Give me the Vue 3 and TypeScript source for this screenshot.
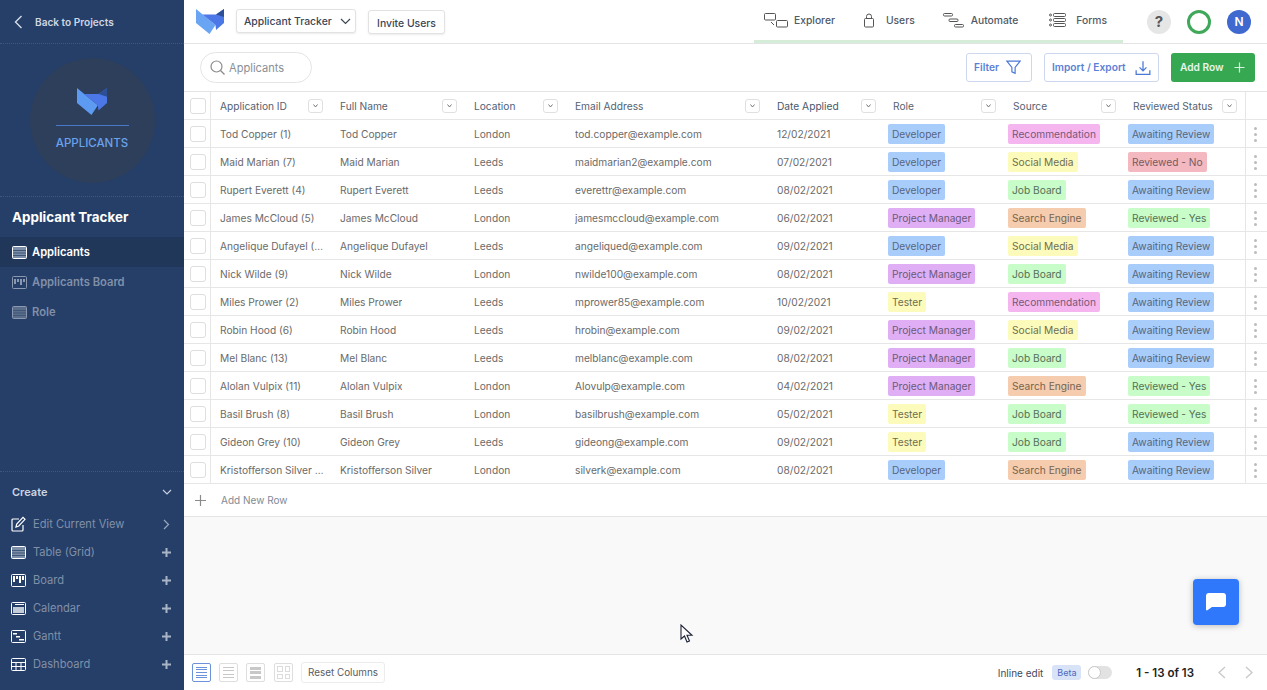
<script setup lang="ts">
interface Row { id: string; name: string; loc: string; email: string; date: string; role: string; source: string; status: string }

const rows: Row[] = [
  { id: 'Tod Copper (1)', name: 'Tod Copper', loc: 'London', email: 'tod.copper@example.com', date: '12/02/2021', role: 'Developer', source: 'Recommendation', status: 'Awaiting Review' },
  { id: 'Maid Marian (7)', name: 'Maid Marian', loc: 'Leeds', email: 'maidmarian2@example.com', date: '07/02/2021', role: 'Developer', source: 'Social Media', status: 'Reviewed - No' },
  { id: 'Rupert Everett (4)', name: 'Rupert Everett', loc: 'Leeds', email: 'everettr@example.com', date: '08/02/2021', role: 'Developer', source: 'Job Board', status: 'Awaiting Review' },
  { id: 'James McCloud (5)', name: 'James McCloud', loc: 'London', email: 'jamesmccloud@example.com', date: '06/02/2021', role: 'Project Manager', source: 'Search Engine', status: 'Reviewed - Yes' },
  { id: 'Angelique Dufayel (12)', name: 'Angelique Dufayel', loc: 'Leeds', email: 'angeliqued@example.com', date: '09/02/2021', role: 'Developer', source: 'Social Media', status: 'Awaiting Review' },
  { id: 'Nick Wilde (9)', name: 'Nick Wilde', loc: 'London', email: 'nwilde100@example.com', date: '08/02/2021', role: 'Project Manager', source: 'Job Board', status: 'Awaiting Review' },
  { id: 'Miles Prower (2)', name: 'Miles Prower', loc: 'Leeds', email: 'mprower85@example.com', date: '10/02/2021', role: 'Tester', source: 'Recommendation', status: 'Awaiting Review' },
  { id: 'Robin Hood (6)', name: 'Robin Hood', loc: 'Leeds', email: 'hrobin@example.com', date: '09/02/2021', role: 'Project Manager', source: 'Social Media', status: 'Awaiting Review' },
  { id: 'Mel Blanc (13)', name: 'Mel Blanc', loc: 'Leeds', email: 'melblanc@example.com', date: '08/02/2021', role: 'Project Manager', source: 'Job Board', status: 'Awaiting Review' },
  { id: 'Alolan Vulpix (11)', name: 'Alolan Vulpix', loc: 'London', email: 'Alovulp@example.com', date: '04/02/2021', role: 'Project Manager', source: 'Search Engine', status: 'Reviewed - Yes' },
  { id: 'Basil Brush (8)', name: 'Basil Brush', loc: 'London', email: 'basilbrush@example.com', date: '05/02/2021', role: 'Tester', source: 'Job Board', status: 'Reviewed - Yes' },
  { id: 'Gideon Grey (10)', name: 'Gideon Grey', loc: 'Leeds', email: 'gideong@example.com', date: '09/02/2021', role: 'Tester', source: 'Job Board', status: 'Awaiting Review' },
  { id: 'Kristofferson Silver (3)', name: 'Kristofferson Silver', loc: 'London', email: 'silverk@example.com', date: '08/02/2021', role: 'Developer', source: 'Search Engine', status: 'Awaiting Review' },
]

const headers = ['Application ID', 'Full Name', 'Location', 'Email Address', 'Date Applied', 'Role', 'Source', 'Reviewed Status']

const colors: Record<string, string> = {
  Developer: 'blue', 'Project Manager': 'purple', Tester: 'yellow',
  Recommendation: 'pink', 'Social Media': 'yellow', 'Job Board': 'green', 'Search Engine': 'orange',
  'Awaiting Review': 'blue', 'Reviewed - No': 'red', 'Reviewed - Yes': 'green',
}

const createItems = ['Table (Grid)', 'Board', 'Calendar', 'Gantt', 'Dashboard']
</script>

<template>
  <div class="app">
    <aside class="side">
      <div class="back">
        <svg class="back-ic" width="10" height="14" viewBox="0 0 10 14"><path d="M7.500 1 1.500 7l6 6" /></svg>
        <span>Back to Projects</span>
      </div>
      <div class="hero">
        <div class="circle">
          <svg class="logo" width="30" height="27" viewBox="0 0 28 25">
            <path d="M0 0 19.500 16 13.500 25 0 14Z" fill="#5d9bf2" />
            <path d="M6.500 5.500H20L28 0V14L20 21 19.500 16Z" fill="#4c77e6" />
            <path d="M20 5.500 28 0V8Z" fill="#2c4f96" />
          </svg>
          <div class="circle-line"></div>
          <div class="circle-text">APPLICANTS</div>
        </div>
      </div>
      <h1 class="app-title">Applicant Tracker</h1>
      <nav class="views">
        <div class="view active">
          <svg class="vic" width="15" height="13" viewBox="0 0 15 13"><rect x=".5" y=".5" width="14" height="12" rx="1" fill="#7d8ea8" stroke="#fff" /><path d="M1 4.500h13M1 7h13M1 9.500h13" stroke="#3f5676" /></svg>
          <span>Applicants</span>
        </div>
        <div class="view">
          <svg class="vic" width="15" height="13" viewBox="0 0 15 13"><rect x=".5" y=".5" width="14" height="12" rx="1" fill="none" stroke="#8a99b0" /><path d="M3 3v5M6 3v3M9 3v6M12 3v3" stroke="#8a99b0" stroke-width="2" /></svg>
          <span>Applicants Board</span>
        </div>
        <div class="view">
          <svg class="vic" width="15" height="13" viewBox="0 0 15 13"><rect x=".5" y=".5" width="14" height="12" rx="1" fill="#5a6d8b" stroke="#8a99b0" /><path d="M1 4.500h13M1 7h13M1 9.500h13" stroke="#3f5676" /></svg>
          <span>Role</span>
        </div>
      </nav>
      <div class="create">
        <div class="create-head">
          <span>Create</span>
          <svg width="10" height="6" viewBox="0 0 10 6"><path d="m1 1 4 4 4-4" fill="none" stroke="#c6cfdc" stroke-width="1.200" /></svg>
        </div>
        <div class="citem">
          <svg class="cic" width="15" height="16" viewBox="0 0 15 16"><path d="M8 3H2a1 1 0 0 0-1 1v10a1 1 0 0 0 1 1h9a1 1 0 0 0 1-1V9" fill="none" stroke="#fff" stroke-width="1.200" /><path d="M5 11l.7-3L12 1.300l2 2L7.800 10Z" fill="none" stroke="#fff" stroke-width="1.200" /></svg>
          <span class="clabel">Edit Current View</span>
          <svg class="edit-arrow" width="7" height="11" viewBox="0 0 7 11"><path d="m1 1 4.500 4.500L1 10" fill="none" stroke="#9aa8bd" stroke-width="1.200" /></svg>
        </div>
        <div v-for="(item, idx) in createItems" :key="item" class="citem">
          <svg class="cic" width="15" height="13" viewBox="0 0 15 13">
            <rect x=".5" y=".5" width="14" height="12" rx="1" :fill="idx === 0 ? '#7d8ea8' : 'none'" stroke="#fff" />
            <path v-if="idx === 0" d="M1 4.500h13M1 7h13M1 9.500h13" stroke="#3f5676" />
            <path v-if="idx === 1" d="M3 2v6M6 2v3M9 2v7M12 2v4" stroke="#fff" stroke-width="2" />
            <path v-if="idx === 2" d="M2 5h11v6H2Z" fill="#c4ccd8" />
            <path v-if="idx === 2" d="M4 2.500h9" stroke="#fff" />
            <path v-if="idx === 3" d="M2 3h4v1.500H2ZM5 6h4v1.500H5ZM8 9h5v1.500H8Z" fill="#fff" />
            <path v-if="idx === 4" d="M1 4.500h13M1 8.500h13M5 4.500V12M10 4.500V12" stroke="#fff" />
          </svg>
          <span class="clabel">{{ item }}</span>
          <svg width="11" height="11" viewBox="0 0 11 11"><path d="M5.500 1v9M1 5.500h9" stroke="#a9b5c7" stroke-width="2" /></svg>
        </div>
      </div>
    </aside>

    <main class="main">
      <header class="top">
        <svg class="top-logo" width="28" height="25" viewBox="0 0 28 25">
          <path d="M0 0 19.500 16 13.500 25 0 14Z" fill="#6aa5f4" />
          <path d="M6.500 5.500H20L28 0V14L20 21 19.500 16Z" fill="#4c77e6" />
          <path d="M20 5.500 28 0V8Z" fill="#2c4f96" />
        </svg>
        <button class="tbtn tracker">
          <span>Applicant Tracker</span>
          <svg width="11" height="7" viewBox="0 0 11 7"><path d="m1 1 4.500 4.500L10 1" fill="none" stroke="#3a4556" stroke-width="1.200" /></svg>
        </button>
        <button class="tbtn invite">Invite Users</button>
        <nav class="tabs">
          <div class="tab tab-explorer">
            <svg width="24" height="15" viewBox="0 0 24 15" fill="none" stroke="#555"><rect x=".5" y=".5" width="11" height="6.500" rx="1" /><rect x="12.500" y="7.500" width="11" height="6.500" rx="1" /><path d="M7 9l3 3" /></svg>
            <span>Explorer</span>
          </div>
          <div class="tab tab-users">
            <svg width="12" height="15" viewBox="0 0 12 15" fill="none" stroke="#555"><rect x="1.500" y="5.500" width="9" height="8.500" rx="1" /><path d="M3.500 5.500V3.500a2.500 2.500 0 0 1 5 0v2" /></svg>
            <span>Users</span>
          </div>
          <div class="tab tab-auto">
            <svg width="21" height="15" viewBox="0 0 21 15" fill="none" stroke="#555"><rect x=".5" y=".5" width="9" height="2.500" rx="1" /><rect x="6" y="6" width="9" height="2.500" rx="1" /><rect x="11.500" y="11.500" width="9" height="2.500" rx="1" /></svg>
            <span>Automate</span>
          </div>
          <div class="tab tab-forms">
            <svg width="17" height="14" viewBox="0 0 17 14" fill="none" stroke="#555"><circle cx="1.500" cy="2" r="1" /><circle cx="1.500" cy="7" r="1" /><circle cx="1.500" cy="12" r="1" /><rect x="4.500" y=".5" width="12" height="3" rx="1" /><rect x="4.500" y="5.500" width="12" height="3" rx="1" /><rect x="4.500" y="10.500" width="12" height="3" rx="1" /></svg>
            <span>Forms</span>
          </div>
        </nav>
        <div class="help">?</div>
        <div class="ring"></div>
        <div class="avatar">N</div>
      </header>

      <section class="toolbar">
        <div class="search">
          <svg width="15" height="15" viewBox="0 0 15 15" fill="none" stroke="#8a8a8a" stroke-width="1.200"><circle cx="6.500" cy="6.500" r="5.500" /><path d="m10.500 10.500 4 4" /></svg>
          <span>Applicants</span>
        </div>
        <div class="tool-right">
          <button class="obtn filter">
            <span class="btxt">Filter</span>
            <svg width="15" height="15" viewBox="0 0 14 14" fill="none" stroke="#4a78d8" stroke-width="1.100"><path d="M.8 1h12.400L8.500 7v5.500l-3-1.500V7Z" /></svg>
          </button>
          <button class="obtn imp">
            <span class="btxt">Import / Export</span>
            <svg width="16" height="16" viewBox="0 0 14 14" fill="none" stroke="#4a78d8" stroke-width="1.100"><path d="M7 1v8M4 6.500 7 9.500l3-3M1 9v3.500h12V9" /></svg>
          </button>
          <button class="gbtn">
            <span class="btxt">Add Row</span>
            <svg width="11" height="11" viewBox="0 0 11 11"><path d="M5.500 .5v10M.5 5.500h10" stroke="#d8f3dd" stroke-width="1.200" /></svg>
          </button>
        </div>
      </section>

      <section class="grid">
        <div class="gr head">
          <div class="c chk"><i class="box"></i></div>
          <div v-for="(h, i) in headers" :key="h" class="c hc" :class="`hc${i}`">
            <span>{{ h }}</span>
            <i class="caret"><svg width="5" height="4" viewBox="0 0 5 4"><path d="M.5.500 2.500 3l2-2.500" fill="none" stroke="#777" /></svg></i>
          </div>
          <div class="c act"></div>
        </div>
        <div v-for="r in rows" :key="r.id" class="gr">
          <div class="c chk"><i class="box"></i></div>
          <div class="c first"><span class="ell">{{ r.id }}</span></div>
          <div class="c"><span class="ell">{{ r.name }}</span></div>
          <div class="c"><span class="ell">{{ r.loc }}</span></div>
          <div class="c"><span class="ell">{{ r.email }}</span></div>
          <div class="c"><span class="ell">{{ r.date }}</span></div>
          <div class="c tagc"><span class="tag" :class="colors[r.role]">{{ r.role }}</span></div>
          <div class="c tagc"><span class="tag" :class="colors[r.source]">{{ r.source }}</span></div>
          <div class="c tagc"><span class="tag" :class="colors[r.status]">{{ r.status }}</span></div>
          <div class="c act"><span class="dots"><i></i><i></i><i></i></span></div>
        </div>
        <div class="addrow">
          <svg width="11" height="11" viewBox="0 0 11 11"><path d="M5.500 0v11M0 5.500h11" stroke="#8a8a8a" stroke-width="1.200" /></svg>
          <span>Add New Row</span>
        </div>
      </section>

      <div class="empty">
        <button class="chat">
          <svg width="20" height="18" viewBox="0 0 20 18"><path d="M3 0h14a3 3 0 0 1 3 3v8a3 3 0 0 1-3 3H6l-5 3.500a1 1 0 0 1-1-.8V3a3 3 0 0 1 3-3Z" fill="#fff" /></svg>
        </button>
        <svg class="cursor" width="14" height="20" viewBox="0 0 14 20"><path d="M1 1v14l3.500-3 2.500 6 2.500-1-2.500-5.700H12Z" fill="#fff" stroke="#1e2438" stroke-width="1.100" /></svg>
      </div>

      <footer class="foot">
        <div class="dens on"><i></i><i></i><i></i><i></i><i></i></div>
        <div class="dens"><i></i><i></i><i></i><i></i></div>
        <div class="dens thick"><i></i><i></i><i></i></div>
        <div class="dens cells"><i></i><i></i><i></i><i></i></div>
        <button class="reset">Reset Columns</button>
        <div class="foot-right">
          <span class="inline">Inline edit</span>
          <span class="beta">Beta</span>
          <span class="toggle"><i></i></span>
          <span class="count">1 - 13 of 13</span>
          <svg class="pg" width="10" height="13" viewBox="0 0 10 13"><path d="M8 1 2 6.500 8 12" fill="none" stroke="#c8c8c8" stroke-width="1.300" /></svg>
          <svg class="pg pg2" width="10" height="13" viewBox="0 0 10 13"><path d="m2 1 6 5.500L2 12" fill="none" stroke="#c8c8c8" stroke-width="1.300" /></svg>
        </div>
      </footer>
    </main>
  </div>
</template>

<style>
html, body { margin: 0; padding: 0; }
</style>

<style scoped>
* { box-sizing: border-box; }
button { font-family: inherit; cursor: pointer; }
i { display: block; font-style: normal; }

.app {
  display: flex;
  width: 1267px;
  height: 690px;
  overflow: hidden;
  font-family: Inter, "Liberation Sans", sans-serif;
  font-size: 10.200px;
  color: #666;
  background: #fff;
}

/* sidebar */
.side {
  width: 184px;
  flex: none;
  background: #253f68;
  display: flex;
  flex-direction: column;
  color: #fff;
}
.back {
  height: 44px;
  display: flex;
  align-items: center;
  gap: 11px;
  padding-left: 14px;
  padding-top: 1px;
  border-bottom: 1px dotted #41577a;
  font-size: 10.100px;
  font-weight: 600;
  color: #ced6e2;
}
.back-ic path { fill: none; stroke: #d6dde7; stroke-width: 1.400; }
.hero {
  height: 153px;
  display: flex;
  align-items: center;
  justify-content: center;
  border-bottom: 1px dotted #41577a;
}
.circle {
  width: 125px;
  height: 125px;
  border-radius: 50%;
  background: #2d3f5b;
  display: flex;
  flex-direction: column;
  align-items: center;
  padding-top: 30px;
}
.logo { flex: none; }
.circle-line { width: 73px; height: 1px; background: #4a78c8; margin-top: 10px; flex: none; }
.circle-text { margin-top: 10px; font-size: 11.500px; font-weight: 500; color: #6aa2ec; }
.app-title {
  margin: 0;
  padding: 12px 0 0 12px;
  height: 40px;
  font-size: 13.400px;
  line-height: 16px;
  font-weight: 700;
  color: #fff;
}
.view {
  height: 30px;
  display: flex;
  align-items: center;
  gap: 5px;
  padding-left: 12px;
  font-size: 11.200px;
  font-weight: 600;
  color: #8190a8;
}
.view.active { background: #213759; color: #fff; }
.vic { flex: none; }
.create {
  margin-top: auto;
  border-top: 1px dotted #41577a;
  padding-bottom: 12px;
}
.create-head {
  height: 38px;
  display: flex;
  align-items: center;
  justify-content: space-between;
  padding: 2px 12px 0;
  font-size: 11px;
  font-weight: 600;
  color: #ced6e2;
}
.citem {
  height: 28px;
  display: flex;
  align-items: center;
  padding: 0 12px 0 11px;
  gap: 7px;
}
.cic { flex: none; }
.clabel { flex: 1; font-size: 11.100px; color: #8190a8; }
.edit-arrow { margin-right: 2px; }

/* main */
.main { flex: 1; min-width: 0; display: flex; flex-direction: column; background: #f9f9f9; }
.top {
  height: 44px;
  flex: none;
  background: #fff;
  border-bottom: 1px solid #e4e4e4;
  display: flex;
  align-items: center;
  padding-left: 12px;
  position: relative;
}
.top-logo { flex: none; }
.tbtn {
  background: #fff;
  border: 1px solid #e2e2e2;
  border-radius: 3px;
  box-shadow: 0 1px 2px rgba(0,0,0,.08);
  font-size: 10.400px;
  font-weight: 500;
  color: #3a4556;
  display: flex;
  align-items: center;
  padding: 0;
}
.tracker { width: 120px; height: 24px; margin-left: 12px; margin-top: -1px; padding: 1px 0 0 7px; gap: 8px; }
.invite { width: 77px; margin-left: 12px; justify-content: center; height: 24px; margin-top: 1px; padding-top: 2px; }
.tabs {
  position: absolute;
  left: 570px;
  top: 0;
  width: 369px;
  height: 43px;
  border-bottom: 3px solid #d5ecd9;
  display: flex;
  align-items: center;
}
.tab { display: flex; align-items: center; font-size: 10.300px; font-weight: 500; color: #505a68; }
.tab-explorer { margin-left: 10px; gap: 6px; }
.tab-users { margin-left: 28px; gap: 11px; }
.tab-auto { margin-left: 28px; gap: 7px; }
.tab-forms { margin-left: 31px; gap: 10px; }
.help {
  position: absolute;
  left: 963px;
  top: 10px;
  width: 24px;
  height: 24px;
  border-radius: 50%;
  background: #e6e6e6;
  color: #555;
  font-size: 15px;
  font-weight: 700;
  text-align: center;
  line-height: 24px;
}
.ring {
  position: absolute;
  left: 1003px;
  top: 10px;
  width: 24px;
  height: 24px;
  border-radius: 50%;
  border: 3.500px solid #3fa85a;
}
.avatar {
  position: absolute;
  left: 1043px;
  top: 10px;
  width: 24px;
  height: 24px;
  border-radius: 50%;
  background: #3f69cf;
  color: #fff;
  font-size: 12px;
  font-weight: 600;
  text-align: center;
  line-height: 24px;
}

.toolbar {
  height: 48px;
  flex: none;
  background: #fff;
  border-bottom: 1px solid #e4e4e4;
  display: flex;
  align-items: center;
  justify-content: space-between;
  padding: 0 12px 0 16px;
}
.search {
  width: 112px;
  height: 31px;
  border: 1px solid #e4e4e4;
  border-radius: 16px;
  display: flex;
  align-items: center;
  gap: 4px;
  padding-left: 9px;
  font-size: 11.100px;
  color: #8a8f96;
}
.tool-right { display: flex; gap: 12px; align-items: center; }
.btxt { margin-top: -1px; }
.obtn {
  height: 29px;
  background: #fff;
  border: 1px solid #cdd7f0;
  border-radius: 3px;
  display: flex;
  align-items: center;
  font-size: 10.200px;
  font-weight: 600;
  color: #5c7fd6;
  padding: 0 0 0 7px;
}
.filter { width: 66px; gap: 7px; }
.imp { width: 115px; gap: 9px; }
.gbtn {
  width: 84px;
  height: 29px;
  border: none;
  border-radius: 3px;
  background: #36a852;
  color: #e6f6ea;
  font-size: 10.200px;
  font-weight: 600;
  display: flex;
  align-items: center;
  gap: 10px;
  padding: 0 0 0 9px;
}

/* grid */
.grid { flex: none; background: #fff; border-bottom: 1px solid #e4e4e4; }
.gr {
  display: grid;
  grid-template-columns: 27px 120px 134px 101px 202px 116px 120px 120px 121px 22px;
  height: 28px;
  border-bottom: 1px solid #e6e6e6;
}
.c {
  display: flex;
  align-items: center;
  padding: 1px 8px 0 9px;
  min-width: 0;
  font-size: 10.200px;
  color: #6a6a6a;
}
.first { padding-right: 6px; }
.chk { padding: 1px 0 0 6px; border-right: 1px solid #e6e6e6; }
.box { width: 16px; height: 16px; border: 1px solid #dedede; border-radius: 3px; background: #fff; }
.ell { overflow: hidden; text-overflow: ellipsis; white-space: nowrap; }
.hc { justify-content: space-between; color: #56626f; }
.hc2 { color: #4b5f78; }
.hc4 { color: #46586e; }
.caret {
  width: 15px;
  height: 14px;
  flex: none;
  border: 1px solid #e0e0e0;
  border-radius: 3px;
  display: flex;
  align-items: center;
  justify-content: center;
}
.tagc { padding: 1px 0 0 4px; }
.tag {
  height: 20px;
  border-radius: 2px;
  padding: 0 4px;
  line-height: 21px;
  white-space: nowrap;
  color: #666;
}
.blue { background: #a9cdfb; color: #56657c; }
.purple { background: #e0aef5; color: #6a5a78; }
.yellow { background: #fdfbbb; color: #6e6e50; }
.pink { background: #f5b6ef; color: #74587a; }
.green { background: #c8fcc8; color: #557058; }
.orange { background: #f6ccae; color: #75644f; }
.red { background: #f3b8c0; color: #765a62; }
.act { border-left: 1px solid #e6e6e6; padding: 1px 0 0 8px; }
.dots { display: flex; flex-direction: column; gap: 3px; }
.dots i { width: 3px; height: 3px; border-radius: 50%; background: #bcbcbc; }
.addrow {
  height: 32px;
  display: flex;
  align-items: center;
  gap: 15px;
  padding-left: 11px;
  font-size: 10px;
  color: #7f8a96;
}

.empty { flex: 1; position: relative; }
.chat {
  position: absolute;
  left: 1009px;
  top: 62px;
  width: 46px;
  height: 46px;
  border: none;
  border-radius: 4px;
  background: #2f78fb;
  box-shadow: 0 1px 6px rgba(0,0,0,.25);
  display: flex;
  align-items: center;
  justify-content: center;
  padding: 0;
}
.cursor { position: absolute; left: 496px; top: 107px; }

.foot {
  height: 36px;
  flex: none;
  background: #fff;
  border-top: 1px solid #e4e4e4;
  display: flex;
  align-items: center;
  padding-left: 8px;
}
.dens {
  width: 19px;
  height: 19px;
  border: 1px solid #dedede;
  border-radius: 2px;
  display: flex;
  flex-direction: column;
  justify-content: space-evenly;
  padding: 1px 3px;
  margin-right: 8px;
  flex: none;
}
.dens i { height: 1px; background: #c8c8c8; }
.dens.on { border-color: #6c92dc; }
.dens.on i { background: #6c92dc; }
.dens.thick { margin-right: 9px; }
.dens.thick i { height: 3px; }
.dens.cells {
  display: grid;
  grid-template-columns: 1fr 1fr;
  grid-template-rows: 1fr 1fr;
  gap: 2px;
  padding: 2px;
  margin-right: 8px;
}
.dens.cells i { height: auto; background: none; border: 1px solid #dcdcdc; }
.reset {
  width: 84px;
  height: 21px;
  background: #fff;
  border: 1px solid #ececec;
  border-radius: 3px;
  font-size: 9.900px;
  color: #565c66;
  padding: 0 0 1px;
}
.foot-right { margin-left: auto; display: flex; align-items: center; padding-right: 13px; }
.inline { font-size: 10px; color: #3f4a5a; }
.beta {
  margin-left: 9px;
  width: 29px;
  height: 15px;
  background: #d9e3f7;
  border-radius: 3px;
  color: #4f68c0;
  font-size: 9px;
  line-height: 15px;
  text-align: center;
}
.toggle {
  margin-left: 7px;
  width: 24px;
  height: 13px;
  border-radius: 7px;
  background: #e2e2e2;
  display: block;
}
.toggle i { width: 13px; height: 13px; border-radius: 50%; background: #fff; border: 1px solid #c8c8c8; }
.count { margin-left: 24px; font-size: 11.500px; font-weight: 600; color: #222; }
.pg { margin-left: 23px; }
.pg2 { margin-left: 17px; }
</style>
